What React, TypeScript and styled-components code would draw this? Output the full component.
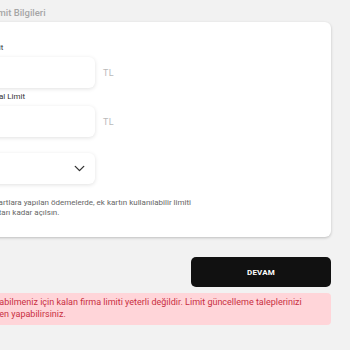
import React from "react";
import styled, { createGlobalStyle } from "styled-components";
import { ChevronDown } from "lucide-react";

const Global = createGlobalStyle`
  html, body { margin: 0; padding: 0; background: #f2f2f2; }
  body { font-family: Roboto, "Liberation Sans", Arial, sans-serif; overflow: hidden; }
  * { box-sizing: border-box; }
`;

const Page = styled.div`
  width: 350px;
  height: 350px;
  overflow: hidden;
  background: #f2f2f2;
`;

const Column = styled.div`
  margin-left: -58px;
  width: 389px;
  display: flex;
  flex-direction: column;
`;

const SectionTitle = styled.div`
  height: 22px;
  padding: 4px 0 0 15px;
  font-size: 9.5px;
  line-height: 18px;
  font-weight: 500;
  color: #a6a6a6;
  white-space: nowrap;
`;

const Card = styled.div`
  background: #fff;
  border-radius: 6px;
  box-shadow: 0 1px 3px rgba(0, 0, 0, 0.22);
  padding: 21px 16px 19px;
  display: flex;
  flex-direction: column;
`;

const Field = styled.div<{ $gapTop?: number }>`
  display: flex;
  flex-direction: column;
  gap: 4px;
  margin-top: ${(p) => p.$gapTop ?? 0}px;
`;

const Label = styled.div`
  font-size: 8px;
  line-height: 10px;
  color: #333;
  white-space: nowrap;
`;

const Row = styled.div`
  display: flex;
  align-items: center;
  gap: 8px;
`;

const InputBox = styled.div`
  width: 137px;
  height: 31px;
  background: #fff;
  border-radius: 6px;
  box-shadow: 0 1px 4px rgba(0, 0, 0, 0.12);
  display: flex;
  align-items: center;
  justify-content: flex-end;
  padding-right: 7px;
  color: #333;
`;

const Unit = styled.span`
  font-size: 9px;
  color: #bababa;
  letter-spacing: 0.3px;
`;

const Note = styled.p`
  margin: 14px 0 0;
  font-size: 8px;
  line-height: 10px;
  color: #666;
  white-space: nowrap;
`;

const Actions = styled.div`
  display: flex;
  justify-content: flex-end;
  margin-top: 20px;
`;

const Primary = styled.button`
  width: 140px;
  height: 30px;
  border: 0;
  border-radius: 5px;
  background: #111;
  color: #fff;
  font-family: inherit;
  font-size: 8px;
  font-weight: 700;
  letter-spacing: 0.2px;
`;

const Alert = styled.div`
  margin-top: 6px;
  height: 32px;
  background: #ffd5d9;
  border-radius: 4px;
  padding: 3px 0 0 19px;
  font-size: 9px;
  line-height: 12px;
  color: #c92f41;
  white-space: nowrap;
`;

export default function App() {
  return (
    <Page>
      <Global />
      <Column>
        <SectionTitle>Ek Kart Limit Bilgileri</SectionTitle>
        <Card>
          <Field>
            <Label>Ek Kart Limit</Label>
            <Row>
              <InputBox />
              <Unit>TL</Unit>
            </Row>
          </Field>
          <Field $gapTop={4}>
            <Label>Ek Kart Sanal Limit</Label>
            <Row>
              <InputBox />
              <Unit>TL</Unit>
            </Row>
          </Field>
          <Field $gapTop={16}>
            <InputBox>
              <ChevronDown size={17} strokeWidth={1.9} />
            </InputBox>
          </Field>
          <Note>
            Ortak ana kartlara yapılan ödemelerde, ek kartın kullanılabilir limiti
            <br />
            yapılanın tutarı kadar açılsın.
          </Note>
        </Card>
        <Actions>
          <Primary>DEVAM</Primary>
        </Actions>
        <Alert>
          İşlem yapabilmeniz için kalan firma limiti yeterli değildir. Limit güncelleme taleplerinizi
          <br />
          ekibimizden yapabilirsiniz.
        </Alert>
      </Column>
    </Page>
  );
}
